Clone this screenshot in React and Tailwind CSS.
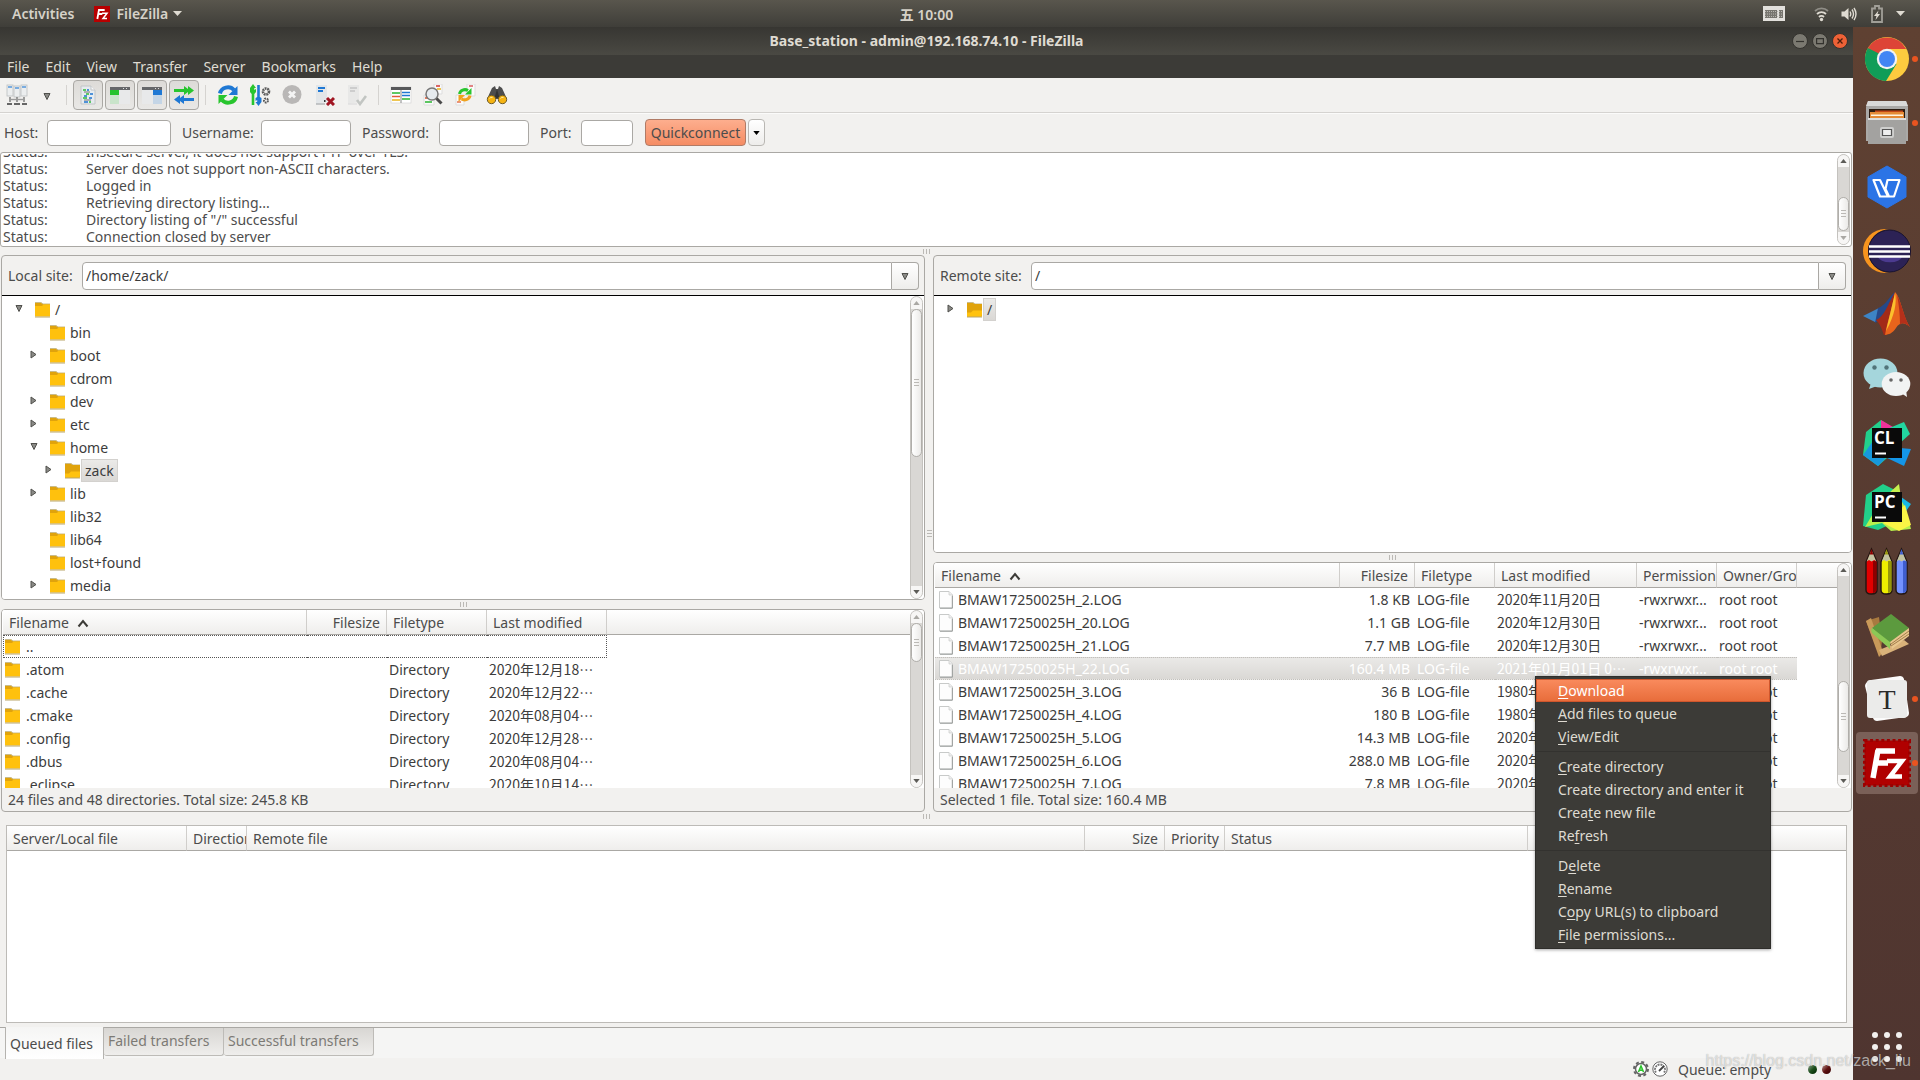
import React from 'react';

/* ---------- small shared pieces ---------- */

function Folder({ open }) {
  return (
    <svg className="h-[17px] w-[15px] shrink-0" viewBox="0 0 15 17" aria-hidden="true">
      <path d="M0 1.5h6l2 1.5h7v4H0z" fill="#e0a30c" />
      <path d="M0 1.5h6l2 1.5h7" fill="none" stroke="#c9bb8a" strokeWidth="1" />
      {open ? (
        <>
          <path d="M0 3h15v12.5H0z" fill="#e0a30c" />
          <path d="M0 11.5h4l2-2h9.5l-1 6.5H0z" fill="#ffc20e" />
        </>
      ) : (
        <path d="M0 5h7l1.5-1.5H15v12H0z" fill="#ffc10d" />
      )}
      <path d="M0 16h15" stroke="#b9a56a" strokeWidth="1" />
    </svg>
  );
}

function Page() {
  return (
    <svg className="h-[18px] w-[14px] shrink-0" viewBox="0 0 14 18" aria-hidden="true">
      <path d="M.5 .5h9.5l3.5 3.5v13H.5z" fill="#fdfdfd" stroke="#c8cac9" />
      <path d="M1 17.2h12.3V5" fill="none" stroke="#999b9a" />
      <path d="M10 .5v3.5h3.5" fill="#eee" stroke="#c8cac9" strokeWidth=".7" />
    </svg>
  );
}

function Triangle({ dir }) {
  const points = { right: '1,1 6,4.500 1,8', down: '1,1.500 7,1.500 4,7.500' }[dir];
  return (
    <svg className="h-[9px] w-[8px] shrink-0" viewBox="0 0 8 9" aria-hidden="true">
      <polygon points={points} fill="#8a8a86" stroke="#50504c" strokeWidth="1" />
    </svg>
  );
}

function SortArrow() {
  return (
    <svg className="mb-px ml-2 inline-block h-[9px] w-[12px]" viewBox="0 0 12 9" aria-hidden="true">
      <path d="M1.5 7.5L6 2l4.5 5.5" fill="none" stroke="#3c3b37" strokeWidth="2" />
    </svg>
  );
}

function Grip({ vertical }) {
  return (
    <div className={vertical ? 'flex flex-col gap-[2px]' : 'flex gap-[2px]'} aria-hidden="true">
      {[0, 1, 2].map((i) => (
        <span key={i} className={vertical ? 'h-px w-[5px] bg-[#bbb9b5]' : 'h-[5px] w-px bg-[#bbb9b5]'} />
      ))}
    </div>
  );
}

function Scrollbar({ before, thumb, after, atTop, atBottom }) {
  return (
    <div className="flex w-[13px] shrink-0 flex-col rounded-full border border-[#c4c2be] bg-[#d9d7d4]" aria-hidden="true">
      <div className="flex h-3 shrink-0 items-center justify-center rounded-t-full bg-[#f7f6f5]">
        <svg className="h-[4px] w-[7px]" viewBox="0 0 8 5"><path d="M0 5L4 0l4 5z" fill={atTop ? '#aaa8a4' : '#5c5b57'} /></svg>
      </div>
      <div className="flex min-h-0 flex-1 flex-col">
        <div style={{ flexGrow: before }} />
        <div
          className="flex items-center justify-center rounded-full border border-[#b0aeaa] bg-linear-to-r from-white to-[#ebeae8]"
          style={{ flexGrow: thumb }}
        >
          <Grip vertical />
        </div>
        <div style={{ flexGrow: after }} />
      </div>
      <div className="flex h-3 shrink-0 items-center justify-center rounded-b-full bg-[#f7f6f5]">
        <svg className="h-[4px] w-[7px]" viewBox="0 0 8 5"><path d="M0 0h8L4 5z" fill={atBottom ? '#aaa8a4' : '#5c5b57'} /></svg>
      </div>
    </div>
  );
}

/* ---------- toolbar ---------- */

const Ico = ({ children }) => (
  <svg className="h-[22px] w-[22px]" viewBox="0 0 22 22" aria-hidden="true">{children}</svg>
);

const TOOL_ICONS = {
  sites: (
    <Ico>
      {[1, 8, 15].map((x) => (
        <g key={x}>
          <rect x={x} y={x === 8 ? 2 : 1} width="6" height="11" fill="#eceeef" stroke="#bcbfc0" strokeWidth=".8" />
          <path d={`M${x + 1} ${x === 8 ? 4 : 3}h4`} stroke="#4a90d9" strokeWidth="1.4" />
          <path d={`M${x + 3} 13v5`} stroke="#777" strokeWidth="1.4" />
        </g>
      ))}
      <path d="M3 15.500h16" stroke="#9b9b9b" strokeWidth="1.4" />
      <path d="M1 20h5M8 20h6M16 20h5" stroke="#666" strokeWidth="2" />
    </Ico>
  ),
  log: (
    <Ico>
      <path d="M4 2h10l4 4v14H4z" fill="#e6ebef" stroke="#c2c5c7" />
      <path d="M14 2v4h4" fill="#f8f8f8" stroke="#c2c5c7" />
      <path d="M6 6h3M9 10h3M6 14h4M12 18h2" stroke="#2fbd3a" strokeWidth="1.4" />
      <path d="M10 6h2M13 10h3M7 12h3M12 14h3M7 18h4" stroke="#1e74cf" strokeWidth="1.4" />
      <path d="M7 8h6M7 16h7" stroke="#777" strokeWidth="1" />
    </Ico>
  ),
  localTree: (
    <Ico>
      <rect x="1" y="3" width="20" height="17" fill="#e8e9ea" />
      <path d="M1 3h20v3H1z" fill="#66676a" />
      <path d="M1 6h9v5H1z" fill="#25c32e" />
      <path d="M1 11h9v9H1z" fill="#c9e4ca" />
      <path d="M14 4.500h1M17 4.500h1" stroke="#ddd" />
    </Ico>
  ),
  remoteTree: (
    <Ico>
      <rect x="1" y="3" width="20" height="17" fill="#e8e9ea" />
      <path d="M1 3h20v3H1z" fill="#66676a" />
      <path d="M12 6h9v5h-9z" fill="#1f78d4" />
      <path d="M12 11h9v9h-9z" fill="#c4d5e6" />
      <path d="M14 4.500h1M17 4.500h1" stroke="#ddd" />
    </Ico>
  ),
  queue: (
    <Ico>
      <path d="M1 5h10V2l4 3V2l6 4.500-6 4.500V8l-4 3V8H1z" fill="#28c52e" />
      <path d="M21 14H11v-3l-4 3v-3l-6 4.500L7 20v-3l4 3v-3h10z" fill="#1f78d4" />
    </Ico>
  ),
  refresh: (
    <Ico>
      <path d="M3 9.500A8 7.500 0 0 1 17 6" fill="none" stroke="#1f78d4" strokeWidth="4" />
      <path d="M20.500 2v9h-9z" fill="#1f78d4" />
      <path d="M19 12.500A8 7.500 0 0 1 5 16" fill="none" stroke="#28c52e" strokeWidth="4" />
      <path d="M1.500 20v-9h9z" fill="#28c52e" />
    </Ico>
  ),
  process: (
    <Ico>
      <path d="M4 0l3 4H5.300v2L7 5v3L5.300 10v11H2.700V10L1 8V4z" fill="#28c52e" />
      <path d="M9.500 22l-3-4h1.700v-2l-1.700 1v-3l1.700-1V1h2.600v12l1.700 1v4z" fill="#1f78d4" />
      <circle cx="17" cy="7.500" r="3" fill="none" stroke="#5a5a5a" strokeWidth="2.600" strokeDasharray="1.8 .7" />
      <circle cx="17" cy="16.500" r="2" fill="none" stroke="#5a5a5a" strokeWidth="2" strokeDasharray="1.6 .7" />
    </Ico>
  ),
  cancel: (
    <Ico>
      <circle cx="11" cy="10.500" r="9.500" fill="#b9b7b6" />
      <path d="M8 7.500l6 6M14 7.500l-6 6" stroke="#f4f4f4" strokeWidth="2.800" />
    </Ico>
  ),
  disconnect: (
    <Ico>
      <path d="M3 1h11v17l-11 2z" fill="#e3e6e8" />
      <path d="M5 4h7M5 7h5" stroke="#1f78d4" strokeWidth="1.800" />
      <path d="M3 20h9" stroke="#a5a8aa" strokeWidth="1.200" />
      <path d="M11 16h1.500v2H11z" fill="#333" />
      <path d="M14 14l7 7M21 14l-7 7" stroke="#a01522" strokeWidth="3" />
    </Ico>
  ),
  reconnect: (
    <Ico>
      <path d="M3 1h11v17l-11 2z" fill="#e8e8e7" />
      <path d="M5 4h7M5 7h5" stroke="#cdcdcd" strokeWidth="1.800" />
      <path d="M3 20h9" stroke="#dcdcdc" strokeWidth="1.200" />
      <path d="M12 16l3 4 6-8" fill="none" stroke="#c2c5c2" strokeWidth="2.600" />
    </Ico>
  ),
  filter: (
    <Ico>
      <rect x="1" y="3" width="20" height="16" fill="#fff" stroke="#cfcfcf" strokeWidth=".6" />
      <path d="M1 3h20v3H1z" fill="#57585a" />
      <path d="M2 9h8" stroke="#28b52e" strokeWidth="1.500" />
      <path d="M2 12.500h8" stroke="#e05a3a" strokeWidth="1.500" />
      <path d="M2 16h8" stroke="#e8b31a" strokeWidth="1.500" />
      <path d="M12 8.500h8M12 11.500h8" stroke="#1f78d4" strokeWidth="1.400" />
      <path d="M12 15h8" stroke="#28b52e" strokeWidth="1.500" />
      <path d="M11 6v13" stroke="#888" />
    </Ico>
  ),
  compare: (
    <Ico>
      <path d="M12 0h8v10h-8z" fill="#fbfbfb" stroke="#ddd" />
      <path d="M14 2h4" stroke="#d13434" strokeWidth="1.500" />
      <path d="M15 5h4" stroke="#e8b31a" strokeWidth="1.500" />
      <path d="M2 11h10v10H2z" fill="#fbfbfb" stroke="#ddd" />
      <path d="M3 14h3" stroke="#e0502a" strokeWidth="1.500" />
      <path d="M3 18h7" stroke="#28b52e" strokeWidth="1.500" />
      <circle cx="10" cy="10" r="6" fill="#e6ebef" stroke="#787878" strokeWidth="1.500" />
      <path d="M14.500 14.500l5 5" stroke="#4a4a4a" strokeWidth="3" />
    </Ico>
  ),
  sync: (
    <Ico>
      <path d="M13 0h8v12h-8z" fill="#fbfbfb" stroke="#ddd" />
      <path d="M2 11h8v10H2z" fill="#fbfbfb" stroke="#ddd" />
      <path d="M15 2h4" stroke="#d13434" strokeWidth="1.200" />
      <path d="M3 18h4" stroke="#e0502a" strokeWidth="1.200" />
      <path d="M5.500 10A5.500 5 0 0 1 14 6.500" fill="none" stroke="#28c52e" strokeWidth="3" />
      <path d="M17.500 4v6.500H11z" fill="#28c52e" />
      <path d="M16 11.500A5.500 5 0 0 1 7.500 15" fill="none" stroke="#f0a11c" strokeWidth="3" />
      <path d="M4.500 18v-7H11z" fill="#f0a11c" />
    </Ico>
  ),
  find: (
    <Ico>
      <path d="M6 4l3-2 1 3h2l1-3 3 2 5 11H1z" fill="#4d4d4d" />
      <path d="M11 5l2.500 9h-5z" fill="#333" />
      <circle cx="5.500" cy="15.500" r="4.200" fill="#f5b312" stroke="#6b5a2a" strokeWidth="1" />
      <circle cx="16.500" cy="15.500" r="4.200" fill="#f5b312" stroke="#6b5a2a" strokeWidth="1" />
      <path d="M3.500 14.500a2.500 2.500 0 0 1 3-1M14.500 14.500a2.500 2.500 0 0 1 3-1" stroke="#fde9a8" fill="none" />
    </Ico>
  ),
};

const TOGGLES = [
  ['log', 'Toggle message log'],
  ['localTree', 'Toggle local directory tree'],
  ['remoteTree', 'Toggle remote directory tree'],
  ['queue', 'Toggle transfer queue'],
];
const ACTIONS = [
  ['refresh', 'Refresh file lists'],
  ['process', 'Process queue'],
  ['cancel', 'Cancel operation'],
  ['disconnect', 'Disconnect'],
  ['reconnect', 'Reconnect'],
];
const TOOLS = [
  ['filter', 'Filename filters'],
  ['compare', 'Directory comparison'],
  ['sync', 'Synchronized browsing'],
  ['find', 'Search for files'],
];

function Divider() {
  return <div className="mx-[6px] h-5 w-px shrink-0 bg-[#d5d3d0]" />;
}

function Toolbar() {
  return (
    <div className="flex h-[35px] shrink-0 items-center border-b border-[#d5d3d0] pl-[6px] shadow-[0_1px_0_#fbfbfa]" role="toolbar">
      <button type="button" aria-label="Site manager">{TOOL_ICONS.sites}</button>
      <button type="button" aria-label="Saved sites" className="ml-[15px] pt-[2px] pr-[9px]">
        <Triangle dir="down" />
      </button>
      <Divider />
      <div className="flex gap-[2px]">
        {TOGGLES.map(([id, label]) => (
          <button
            key={id}
            type="button"
            aria-label={label}
            aria-pressed="true"
            className="flex h-[30px] w-[30px] items-center justify-center rounded-[4px] border border-[#aaa8a4] bg-linear-to-b from-[#dddbd8] to-[#e9e8e6]"
          >
            {TOOL_ICONS[id]}
          </button>
        ))}
      </div>
      <Divider />
      <div className="flex gap-[10px] px-[5px]">
        {ACTIONS.map(([id, label]) => (
          <button key={id} type="button" aria-label={label}>{TOOL_ICONS[id]}</button>
        ))}
      </div>
      <Divider />
      <div className="flex gap-[10px] pl-[5px]">
        {TOOLS.map(([id, label]) => (
          <button key={id} type="button" aria-label={label}>{TOOL_ICONS[id]}</button>
        ))}
      </div>
    </div>
  );
}

function Field({ id, label, labelClass, inputClass, type = 'text' }) {
  return (
    <>
      <label htmlFor={id} className={`shrink-0 ${labelClass}`}>{label}</label>
      <input id={id} type={type} className={`h-[26px] rounded-[4px] border border-[#aaa8a4] bg-white px-1 ${inputClass}`} />
    </>
  );
}

function QuickConnect() {
  return (
    <form className="flex h-[39px] shrink-0 items-center pl-1" onSubmit={(e) => e.preventDefault()}>
      <Field id="host" label="Host:" labelClass="w-[43px]" inputClass="w-[124px]" />
      <Field id="user" label="Username:" labelClass="ml-[11px] w-[79px]" inputClass="w-[90px]" />
      <Field id="pass" label="Password:" labelClass="ml-[11px] w-[77px]" inputClass="w-[90px]" type="password" />
      <Field id="port" label="Port:" labelClass="ml-[11px] w-[41px]" inputClass="w-[52px]" />
      <button
        type="submit"
        className="ml-3 flex h-[27px] w-[101px] items-center justify-center rounded-[4px] border border-[#b07b66] bg-linear-to-b from-[#fdae8e] to-[#f58c63]"
      >
        Quickconnect
      </button>
      <button
        type="button"
        aria-label="Quickconnect history"
        className="ml-[2px] flex h-[27px] w-[17px] items-center justify-center rounded-[4px] border border-[#b9b7b3] bg-linear-to-b from-white to-[#eeedeb]"
      >
        <svg className="h-[4px] w-[7px]" viewBox="0 0 8 5"><path d="M0 0h8L4 5z" fill="#000" /></svg>
      </button>
    </form>
  );
}

/* ---------- message log ---------- */

const LOG = [
  'Insecure server, it does not support FTP over TLS.',
  'Server does not support non-ASCII characters.',
  'Logged in',
  'Retrieving directory listing...',
  'Directory listing of "/" successful',
  'Connection closed by server',
];

function MessageLog() {
  return (
    <section className="mr-px flex h-[95px] shrink-0 overflow-hidden rounded-[3px] border border-[#aaa8a4] bg-white py-px pr-px pl-[2px]">
      <div className="flex flex-1 flex-col justify-end overflow-hidden">
        {LOG.map((text) => (
          <p key={text} className="flex h-[17px] shrink-0 items-center leading-[17px]">
            <span className="w-[83px]">Status:</span>
            <span>{text}</span>
          </p>
        ))}
      </div>
      <Scrollbar before={36} thumb={31} after={1} atBottom />
    </section>
  );
}

/* ---------- site bars and trees ---------- */

function SiteBar({ id, label, value, labelClass }) {
  return (
    <div className="flex h-[40px] shrink-0 items-center border-b border-black px-[5px]">
      <label htmlFor={id} className={`shrink-0 ${labelClass}`}>{label}</label>
      <input
        id={id}
        defaultValue={value}
        className="h-7 min-w-0 flex-1 rounded-l-[4px] border border-[#aaa8a4] bg-white px-[3px] text-[#3c3c3c]"
      />
      <button
        type="button"
        aria-label={`${label} history`}
        className="flex h-7 w-[27px] items-center justify-center rounded-r-[4px] border border-l-0 border-[#aaa8a4] bg-linear-to-b from-white to-[#eeedeb] pt-[2px]"
      >
        <Triangle dir="down" />
      </button>
    </div>
  );
}

const INDENT = ['pl-[13px]', 'pl-[28px]', 'pl-[43px]'];

function TreeRow({ name, level, arrow, open, selected }) {
  return (
    <li className={`flex h-[23px] items-center ${INDENT[level]}`}>
      <span className="mr-[12px] w-[8px] pb-[2px]">{arrow && <Triangle dir={arrow} />}</span>
      <Folder open={open} />
      <span
        className={
          selected
            ? 'ml-px h-[23px] border border-[#d3d1ce] bg-linear-to-b from-[#ebeae8] to-[#dad8d5] px-[3px] leading-[22px] text-[#3c3c3c]'
            : 'px-[5px] leading-[23px] text-[#3c3c3c]'
        }
      >
        {name}
      </span>
    </li>
  );
}

const LOCAL_TREE = [
  { name: '/', level: 0, arrow: 'down' },
  { name: 'bin', level: 1 },
  { name: 'boot', level: 1, arrow: 'right' },
  { name: 'cdrom', level: 1 },
  { name: 'dev', level: 1, arrow: 'right' },
  { name: 'etc', level: 1, arrow: 'right' },
  { name: 'home', level: 1, arrow: 'down' },
  { name: 'zack', level: 2, arrow: 'right', open: true, selected: true },
  { name: 'lib', level: 1, arrow: 'right' },
  { name: 'lib32', level: 1 },
  { name: 'lib64', level: 1 },
  { name: 'lost+found', level: 1 },
  { name: 'media', level: 1, arrow: 'right' },
];

const PANEL = 'flex min-h-0 flex-col overflow-hidden rounded-[4px] border border-[#aaa8a4]';

/* ---------- file lists ---------- */

const TH = 'h-[25px] overflow-hidden border-r border-b border-[#d0cecb] border-b-[#aaa8a4] px-[6px] text-left font-normal whitespace-nowrap';
const TD = 'h-[23px] overflow-hidden px-[1px] text-ellipsis whitespace-nowrap';
const CJK = "font-['Noto_Sans_CJK_SC',sans-serif]";

const LOCAL_FILES = [
  ['..', '', ''],
  ['.atom', 'Directory', '2020年12月18…'],
  ['.cache', 'Directory', '2020年12月22…'],
  ['.cmake', 'Directory', '2020年08月04…'],
  ['.config', 'Directory', '2020年12月28…'],
  ['.dbus', 'Directory', '2020年08月04…'],
  ['.eclipse', 'Directory', '2020年10月14…'],
];

const REMOTE_FILES = [
  ['_2', '1.8 KB', '2020年11月20日'],
  ['_20', '1.1 GB', '2020年12月30日'],
  ['_21', '7.7 MB', '2020年12月30日'],
  ['_22', '160.4 MB', '2021年01月01日 0…', true],
  ['_3', '36 B', '1980年01月01日'],
  ['_4', '180 B', '1980年01月01日'],
  ['_5', '14.3 MB', '2020年11月20日'],
  ['_6', '288.0 MB', '2020年11月20日'],
  ['_7', '7.8 MB', '2020年11月20日'],
];

function LocalList() {
  const dot = 'border-y border-dotted border-[#555]';
  return (
    <section className={`${PANEL} flex-[202_1_0]`}>
      <div className="flex min-h-0 flex-1 overflow-hidden bg-white pr-px pl-px">
        <div className="min-w-0 flex-1 overflow-hidden">
          <table className="w-full table-fixed border-separate border-spacing-0 leading-[21px]">
            <colgroup>
              <col className="w-[304px]" />
              <col className="w-[80px]" />
              <col className="w-[100px]" />
              <col className="w-[120px]" />
              <col />
            </colgroup>
            <thead className="bg-linear-to-b from-white to-[#eeedeb]">
              <tr>
                <th className={TH}>Filename<SortArrow /></th>
                <th className={TH}><span className="block text-right">Filesize</span></th>
                <th className={TH}>Filetype</th>
                <th className={TH}>Last modified</th>
                <th className="border-b border-[#aaa8a4]" />
              </tr>
            </thead>
            <tbody className="text-[#3c3c3c]">
              {LOCAL_FILES.map(([name, type, date], i) => (
                <tr key={name}>
                  <td className={`${TD} ${i === 0 ? `${dot} border-l` : 'pl-[2px]'}`}>
                    <span className="flex items-center gap-[6px]"><Folder />{name}</span>
                  </td>
                  <td className={`${TD} ${i === 0 ? dot : ''}`} />
                  <td className={`${TD} ${i === 0 ? dot : ''}`}><span className="pl-px">{type}</span></td>
                  <td className={`${TD} ${CJK} ${i === 0 ? `${dot} border-r` : ''}`}><span className="pl-px">{date}</span></td>
                  <td />
                </tr>
              ))}
            </tbody>
          </table>
        </div>
        <Scrollbar before={0} thumb={31} after={121} atTop />
      </div>
      <p className="flex h-[23px] shrink-0 items-center px-[6px]">24 files and 48 directories. Total size: 245.8 KB</p>
    </section>
  );
}

function RemoteList() {
  return (
    <section className={`${PANEL} flex-1`}>
      <div className="flex min-h-0 flex-1 overflow-hidden bg-white pr-px pl-px">
        <div className="min-w-0 flex-1 overflow-hidden">
          <table className="w-full table-fixed border-separate border-spacing-0 leading-[21px]">
            <colgroup>
              <col className="w-[405px]" />
              <col className="w-[75px]" />
              <col className="w-[80px]" />
              <col className="w-[142px]" />
              <col className="w-[80px]" />
              <col className="w-[80px]" />
              <col />
            </colgroup>
            <thead className="bg-linear-to-b from-white to-[#eeedeb]">
              <tr>
                <th className={TH}>Filename<SortArrow /></th>
                <th className={TH}><span className="block text-right">Filesize</span></th>
                <th className={TH}>Filetype</th>
                <th className={TH}>Last modified</th>
                <th className={`${TH} pr-0`}>Permissions</th>
                <th className={`${TH} pr-0`}>Owner/Group</th>
                <th className="border-b border-[#aaa8a4]" />
              </tr>
            </thead>
            <tbody className="text-[#3c3c3c]">
              {REMOTE_FILES.map(([suffix, size, date, selected]) => {
                const cell = selected
                  ? `${TD} border-y border-dotted border-[#c3c1bd] bg-linear-to-b from-[#eae9e7] to-[#dad8d5] text-white`
                  : TD;
                return (
                  <tr key={suffix}>
                    <td className={cell}>
                      <span className="flex items-center gap-[5px] pl-[3px]"><Page />{`BMAW17250025H${suffix}.LOG`}</span>
                    </td>
                    <td className={`${cell} text-right`}><span className="pr-[4px]">{size}</span></td>
                    <td className={cell}><span className="pl-px">LOG-file</span></td>
                    <td className={`${cell} ${CJK}`}><span className="pl-px">{date}</span></td>
                    <td className={cell}><span className="pl-px">-rwxrwxr...</span></td>
                    <td className={cell}><span className="pl-px">root root</span></td>
                    <td />
                  </tr>
                );
              })}
            </tbody>
          </table>
        </div>
        <Scrollbar before={109} thumb={65} after={24} />
      </div>
      <p className="flex h-[23px] shrink-0 items-center px-[6px]">Selected 1 file. Total size: 160.4 MB</p>
    </section>
  );
}

/* Each entry: text before the mnemonic, the mnemonic, text after it. */
const MENU = [
  [['', 'D', 'ownload'], ['', 'A', 'dd files to queue'], ['', 'V', 'iew/Edit']],
  [['', 'C', 'reate directory'], ['Create director', 'y', ' and enter it'], ['Crea', 't', 'e new file'], ['Re', 'f', 'resh']],
  [['D', 'e', 'lete'], ['', 'R', 'ename'], ['C', 'o', 'py URL(s) to clipboard'], ['', 'F', 'ile permissions...']],
];

function ContextMenu() {
  return (
    <div
      role="menu"
      className="absolute top-[114px] left-[602px] z-10 w-[236px] border border-[#2f2e2b] bg-[#3c3b37] py-[2px] text-[#dfdbd2] shadow-[0_1px_3px_rgba(0,0,0,0.35)]"
    >
      {MENU.map((group, g) => (
        <div key={g} className={g > 0 ? 'mt-[3px] border-t border-[#33322f] pt-[3px]' : ''}>
          {group.map(([pre, key, post], i) => (
            <button
              key={pre + key + post}
              type="button"
              role="menuitem"
              className={
                g === 0 && i === 0
                  ? 'block h-[23px] w-full border border-[#d0562c] bg-linear-to-b from-[#f98a5c] to-[#e86d3b] pl-[21px] text-left leading-[21px] text-white'
                  : 'block h-[23px] w-full pl-[22px] text-left leading-[23px]'
              }
            >
              {pre}
              <span className={key === 'y' ? '' : 'underline underline-offset-2'}>{key}</span>
              {post}
            </button>
          ))}
        </div>
      ))}
    </div>
  );
}

/* ---------- transfer queue ---------- */

function TransferQueue() {
  return (
    <section className="flex shrink-0 flex-col">
      <div className="mr-[6px] ml-[6px] h-[198px] overflow-hidden border border-[#bdbbb7] bg-white">
        <table className="w-full table-fixed border-separate border-spacing-0">
          <colgroup>
            <col className="w-[180px]" />
            <col className="w-[60px]" />
            <col className="w-[838px]" />
            <col className="w-[80px]" />
            <col className="w-[60px]" />
            <col className="w-[303px]" />
            <col />
          </colgroup>
          <thead className="bg-linear-to-b from-white to-[#eeedeb]">
            <tr>
              <th className={TH}>Server/Local file</th>
              <th className={`${TH} pr-0`}>Direction</th>
              <th className={TH}>Remote file</th>
              <th className={TH}><span className="block text-right">Size</span></th>
              <th className={`${TH} pr-0`}>Priority</th>
              <th className={TH}>Status</th>
              <th className="border-b border-[#aaa8a4]" />
            </tr>
          </thead>
        </table>
      </div>
      <div className="mt-1 flex h-[31px] items-start border-t border-[#aaa8a4] bg-[#f5f5f4] pl-[5px]" role="tablist">
        <button
          type="button"
          role="tab"
          aria-selected="true"
          className="-mt-px h-8 w-[99px] border-x border-[#b5b3af] bg-linear-to-b from-[#f5f5f4] to-white pl-1 text-left"
        >
          Queued files
        </button>
        <button
          type="button"
          role="tab"
          aria-selected="false"
          className="h-[28px] w-[120px] rounded-b-[3px] border border-t-0 border-l-0 border-[#bdbbb7] bg-linear-to-b from-[#d8d6d3] to-[#efeeec] pb-[2px] pl-1 text-left text-[#7c7a75]"
        >
          Failed transfers
        </button>
        <button
          type="button"
          role="tab"
          aria-selected="false"
          className="h-[28px] w-[150px] rounded-b-[3px] border border-t-0 border-l-0 border-[#bdbbb7] bg-linear-to-b from-[#d8d6d3] to-[#efeeec] pb-[2px] pl-1 text-left text-[#7c7a75]"
        >
          Successful transfers
        </button>
      </div>
      <footer className="flex h-[22px] items-center justify-end pr-[22px]">
        <svg className="mr-[3px] h-4 w-4" viewBox="0 0 16 16" aria-hidden="true">
          <circle cx="8" cy="8" r="7" fill="none" stroke="#666" strokeWidth="2" strokeDasharray="3 2.500" />
          <circle cx="8" cy="8" r="5.500" fill="#fff" stroke="#666" strokeWidth="1.500" />
          <path d="M5.500 11L8 5l2.500 6M6.500 9.200h3" fill="none" stroke="#2cc42c" strokeWidth="1.600" />
        </svg>
        <svg className="mr-[10px] h-4 w-4" viewBox="0 0 16 16" aria-hidden="true">
          <circle cx="8" cy="8" r="7.200" fill="#fff" stroke="#666" strokeWidth="1" />
          <path d="M4 11.500a5 5 0 1 1 8 0" fill="none" stroke="#777" strokeWidth="1.800" strokeDasharray="2 .8" />
          <path d="M7 10l5-5" stroke="#444" strokeWidth="1.800" />
        </svg>
        <span className="w-[93px] whitespace-nowrap">Queue: empty</span>
        <span className="ml-[37px] h-[9px] w-[9px] rounded-full bg-linear-to-br from-[#8fa58f] via-[#1d4f1d] to-[#022502]" />
        <span className="ml-[5px] h-[9px] w-[9px] rounded-full bg-linear-to-br from-[#b58f8f] via-[#5f1212] to-[#330202]" />
      </footer>
    </section>
  );
}

/* ---------- dock ---------- */

const FzMark = () => (
  <g fill="none" stroke="#fff" strokeLinejoin="miter">
    <path d="M10 39l5-28M13 12h19M12 24h13" strokeWidth="5.500" />
    <path d="M24 22h15L27 37.500h12" strokeWidth="4.500" />
  </g>
);

const DOCK = [
  {
    name: 'Google Chrome', running: true,
    art: (
      <>
        <circle cx="24" cy="24" r="22" fill="#fdcb3f" />
        <path d="M4.900 13A22 22 0 0 0 23 46l10.500-17L24 24z" fill="#109d58" />
        <path d="M4.900 13A22 22 0 0 1 43.100 14H24L14 27z" fill="#dd4437" />
        <path d="M4.900 13l9 15.500 4-9z" fill="#109d58" />
        <circle cx="24" cy="24" r="10.200" fill="#f3f3f3" />
        <circle cx="24" cy="24" r="8" fill="#4285f4" />
      </>
    ),
  },
  {
    name: 'Files', running: true,
    art: (
      <>
        <path d="M5 2h38l2 6v34H3V8z" fill="#aaa9a7" />
        <path d="M5 2h38l2 5H3z" fill="#d9d9d8" />
        <path d="M6 10h36v12H6z" fill="#2b1c12" />
        <path d="M7 13h34v8H7z" fill="#e48a35" />
        <path d="M8 15.500h32v1.500H8z" fill="#fff3e0" />
        <path d="M12 11.500h28v1.500H12z" fill="#c14719" />
        <path d="M5 19h38v26H5z" fill="#a3a2a0" />
        <path d="M5 19h38v2H5z" fill="#dededd" />
        <rect x="17" y="28" width="14" height="11" rx="2" fill="#cfcfce" />
        <path d="M19.500 30.500h9v6h-9z" fill="#efefef" stroke="#555" strokeWidth="1.200" />
      </>
    ),
  },
  {
    name: 'WPS Writer',
    art: (
      <>
        <path d="M24 3l19 11v20L24 45 5 34V14z" fill="#2b74e6" strokeLinejoin="round" stroke="#2b74e6" />
        <path d="M10.500 17h6.500l8 16.500h-8zM24.500 17h12l-5.500 16.500h-5L22.500 26z" fill="none" stroke="#fff" strokeWidth="2.200" strokeLinejoin="round" />
      </>
    ),
  },
  {
    name: 'Eclipse',
    art: (
      <>
        <circle cx="22" cy="24" r="22" fill="#f7941e" />
        <circle cx="27" cy="24" r="22" fill="#5e4132" />
        <circle cx="26.500" cy="24" r="21" fill="#2c2255" stroke="#18122f" />
        <path d="M14 29h26a14 10 0 0 1-26 0z" fill="#4b3a8f" />
        <path d="M6 19.500h41M6 24.500h41M6 29.500h41" stroke="#fff" strokeWidth="2.400" />
      </>
    ),
  },
  {
    name: 'MATLAB',
    art: (
      <>
        <path d="M0 25l16-8 7 6-11 8z" fill="#3d84c6" />
        <path d="M15 17C22 15 26 6 32 1l-8 24-12 7z" fill="#26498a" />
        <path d="M13 29c8-3 11-14 19-28l-6 42-5 1c-2-5-3-10-8-15z" fill="#a32a18" />
        <path d="M32 1c6 6 8 25 15 35-6-5-10-5-14 1s-7 6-11 7c2-12 7-26 10-43z" fill="#e8641c" />
        <path d="M32 2c2 9 0 22-9 38 3-13 6-25 9-38z" fill="#fbc02d" />
        <path d="M34 4c5 9 7 23 13 32-6-5-9-4-10-2 0-10-1-20-3-30z" fill="#b5301a" />
      </>
    ),
  },
  {
    name: 'WeChat',
    art: (
      <>
        <ellipse cx="17.500" cy="18" rx="17" ry="14.500" fill="#a5d6dc" />
        <path d="M8 28l-2 6 8-3z" fill="#a5d6dc" />
        <circle cx="11.500" cy="12.500" r="2.200" fill="#52747a" /><circle cx="23.500" cy="12.500" r="2.200" fill="#52747a" />
        <ellipse cx="33" cy="29" rx="14.300" ry="12" fill="#f1f3f3" />
        <path d="M38 38l6 4-1-7z" fill="#f1f3f3" />
        <circle cx="28" cy="25" r="1.800" fill="#666" /><circle cx="38" cy="25" r="1.800" fill="#666" />
      </>
    ),
  },
  {
    name: 'CLion',
    art: (
      <>
        <path d="M3 13L18 1l12 8-6 30-9 8L0 36z" fill="#22d08c" />
        <path d="M0 36l10-14 12 18-7 7z" fill="#1798dc" />
        <path d="M18 1l12 7-12 6z" fill="#f0319a" />
        <path d="M24 10l17-7 6 12-10 9z" fill="#22d5a0" />
        <path d="M22 38l15-9 11 1-7 17z" fill="#1496e8" />
        <rect x="9" y="9" width="30" height="30" fill="#0a0a0a" />
        <path d="M12 34.500h11" stroke="#fff" strokeWidth="2" />
        <text x="11" y="25" fill="#fff" fontSize="17" fontWeight="700" fontFamily="Open Sans, sans-serif">CL</text>
      </>
    ),
  },
  {
    name: 'PyCharm',
    art: (
      <>
        <path d="M3 12L20 1l12 6-4 34-13 6L0 43z" fill="#21cf8a" />
        <path d="M26 10l10-9 2 14z" fill="#c7f04e" />
        <path d="M38 14l10 7-7 10z" fill="#18b9e6" />
        <path d="M2 44l12-20 20-14 8 14 6 22-20 2-9-8z" fill="#b7ef4d" />
        <path d="M20 40l22-18 6 20-12 6z" fill="#fbf546" />
        <rect x="9" y="9" width="30" height="30" fill="#0a0a0a" />
        <path d="M12 34.500h11" stroke="#fff" strokeWidth="2" />
        <text x="11" y="25" fill="#fff" fontSize="17" fontWeight="700" fontFamily="Open Sans, sans-serif">PC</text>
      </>
    ),
  },
  {
    name: 'Crayons',
    art: (
      <>
        {[['#e10000', '#8d0000', 3], ['#eeee00', '#97970a', 18], ['#7391ff', '#3f5ed0', 33]].map(([a, b, x]) => (
          <g key={x} transform={`translate(${x} 1)`}>
            <path d="M0 14L5.500 1 11 14v28q0 4-5.500 4T0 42z" fill={a} stroke="#221510" strokeWidth="1.400" />
            <path d="M7 13h3.500v29q0 2-3.500 3z" fill={b} />
            <path d="M.7 13.500L5.500 2l4.800 11.500-2-1.500-2.800 1.500-2.500-1.500z" fill="#c3c3a0" />
            <path d="M3.700 6.500L5.500 1l1.800 5.500z" fill={b} />
          </g>
        ))}
      </>
    ),
  },
  {
    name: 'Books',
    art: (
      <>
        <path d="M3 10l13-4 3 24-2 16z" fill="#a8793f" />
        <path d="M3 10l5-3 12 34-4 5z" fill="#c99a5a" />
        <path d="M16 39l25-10 5 4-27 12z" fill="#d9b27a" />
        <path d="M9 17L28 3l18 14-19 16z" fill="#5c9a3e" />
        <path d="M9 17l18 14 0 7L10 23q-3-3-1-6z" fill="#8cc956" />
        <path d="M27 31l19-14v8L29 38z" fill="#e8c68e" />
        <path d="M28 35l18-12M28 33l18-13" stroke="#8f6a3a" strokeWidth=".8" />
      </>
    ),
  },
  {
    name: 'Typora', running: true,
    art: (
      <>
        <path d="M8 5l29-4q3 0 4 3l5 34q0 3-3 4l-29 4q-3 0-4-3L2 11q0-4 6-6z" fill="#fbfbfb" />
        <rect x="4" y="5" width="40" height="38" rx="3" fill="#ebebea" />
        <text x="24" y="34" textAnchor="middle" fill="#2a2a2a" fontSize="28" fontFamily="Liberation Serif, serif">T</text>
      </>
    ),
  },
  {
    name: 'FileZilla', running: true, active: true,
    art: (
      <>
        <rect x="1.500" y="1.500" width="45" height="45" fill="#b00000" stroke="#9c0000" strokeWidth="3" strokeDasharray="3 2.600" />
        <FzMark />
      </>
    ),
  },
];

function Dock() {
  return (
    <nav className="flex w-[67px] shrink-0 flex-col bg-linear-to-b from-[#5f4132] to-[#4f3530]" aria-label="Dock">
      {DOCK.map(({ name, art, running, active }) => (
        <button key={name} type="button" aria-label={name} className="relative flex h-16 shrink-0 items-center justify-center">
          <span className={`flex h-[62px] w-[62px] items-center justify-center rounded-[4px] ${active ? 'bg-[#7a6058]' : ''}`}>
            <svg className="h-12 w-12" viewBox="0 0 48 48">{art}</svg>
          </span>
          {running && <span className="absolute top-[29px] right-[2px] h-[6px] w-[6px] rounded-full bg-[#e95420]" />}
        </button>
      ))}
      <button type="button" aria-label="Show applications" className="mt-auto mb-[18px] flex justify-center">
        <svg className="h-[30px] w-[30px]" viewBox="0 0 30 30">
          {[3, 15, 27].map((y) => [3, 15, 27].map((x) => <circle key={`${x}-${y}`} cx={x} cy={y} r="3" fill="#f2f0ee" />))}
        </svg>
      </button>
    </nav>
  );
}

/* ---------- top bar and window chrome ---------- */

function TopBar() {
  return (
    <header className="grid h-[27px] shrink-0 grid-cols-[1fr_auto_1fr_67px] items-center bg-linear-to-b from-[#59564d] to-[#3f3e39] font-semibold text-[#d6d2c9]">
      <div className="flex items-center pl-3">
        <button type="button">Activities</button>
        <button type="button" className="ml-5 flex items-center">
          <svg className="mr-[6px] h-4 w-4" viewBox="0 0 48 48" aria-hidden="true">
            <path d="M0 0h48v48H0z" fill="#b80000" />
            <FzMark />
          </svg>
          FileZilla
          <svg className="ml-[5px] h-[5px] w-[9px]" viewBox="0 0 9 5"><path d="M0 0h9L4.500 5z" fill="#dfdbd2" /></svg>
        </button>
      </div>
      <time className="pt-px">五 10:00</time>
      <div className="col-span-2 flex items-center justify-end pr-[15px]">
        <svg className="mr-[29px] h-4 w-[22px]" viewBox="0 0 22 16" aria-label="Keyboard">
          <path d="M0 0h22v15H0z" fill="#e2e0dc" />
          <path d="M2 4h12v8H2zM16 4h4v8h-4z" fill="#77756f" />
          <path d="M2 5.500h18M2 8h18M2 10.500h18" stroke="#b9b7b1" strokeDasharray="1 1" />
        </svg>
        <svg className="mr-3 h-4 w-[15px]" viewBox="0 0 15 16" aria-label="Wi-Fi" fill="none">
          <path d="M1 5a9.500 9.500 0 0 1 13 0" stroke="#8f8d86" strokeWidth="1.800" />
          <path d="M3 8a6.500 6.500 0 0 1 9 0M5 11a3.500 3.500 0 0 1 5 0" stroke="#dfdbd2" strokeWidth="1.800" />
          <circle cx="7.500" cy="13.500" r="1.700" fill="#dfdbd2" />
        </svg>
        <svg className="mr-[14px] h-4 w-4" viewBox="0 0 16 16" aria-label="Volume" fill="none" stroke="#dfdbd2" strokeWidth="1.400">
          <path d="M.5 5.500h3L7.500 2v12l-4-3.500h-3z" fill="#dfdbd2" stroke="none" />
          <path d="M9 5.500q1.500 2.500 0 5M11 3.500q3 4.500 0 9M13 2q4 6 0 12" />
        </svg>
        <svg className="mr-[13px] h-[18px] w-[12px]" viewBox="0 0 12 18" aria-label="Battery">
          <path d="M1 3.500h3V1h4v2.500h3V17H1z" fill="none" stroke="#a19f98" strokeWidth="1.800" />
          <path d="M7.500 5.500L3 11h2.500l-1 4L9 9H6.500z" fill="#dfdbd2" />
        </svg>
        <svg className="h-[5px] w-[9px]" viewBox="0 0 9 5" aria-hidden="true"><path d="M0 0h9L4.500 5z" fill="#dfdbd2" /></svg>
      </div>
    </header>
  );
}

const ROUND = 'flex h-4 w-4 items-center justify-center rounded-full border border-[#33322e]';

function TitleBar() {
  return (
    <div className="grid h-7 shrink-0 grid-cols-[1fr_auto_1fr] items-center bg-linear-to-b from-[#373632] to-[#4a4943] text-[#dfdbd2]">
      <span />
      <h1 className="pb-px font-bold">Base_station - admin@192.168.74.10 - FileZilla</h1>
      <div className="flex justify-end gap-1 pr-[5px]">
        <button type="button" aria-label="Minimize" className={`${ROUND} bg-[#7b7971]`}>
          <svg className="h-2 w-2" viewBox="0 0 8 8"><path d="M0 4.500h8" stroke="#33322e" strokeWidth="1.200" /></svg>
        </button>
        <button type="button" aria-label="Maximize" className={`${ROUND} bg-[#7b7971]`}>
          <svg className="h-2 w-2" viewBox="0 0 8 8"><path d="M.6 1.600h6.800v5H.6z" fill="none" stroke="#33322e" strokeWidth="1.200" /></svg>
        </button>
        <button type="button" aria-label="Close" className={`${ROUND} bg-[#ee6136]`}>
          <svg className="h-2 w-2" viewBox="0 0 8 8"><path d="M1.500 1.500l5 5M6.500 1.500l-5 5" stroke="#4b1d0c" strokeWidth="1.300" /></svg>
        </button>
      </div>
    </div>
  );
}

const MENUS = ['File', 'Edit', 'View', 'Transfer', 'Server', 'Bookmarks', 'Help'];

export default function App() {
  return (
    <div className="relative flex h-screen flex-col overflow-hidden font-['Noto_Sans','Noto_Sans_CJK_SC',sans-serif] text-[14px] text-[#4c4c4c]">
      <TopBar />
      <div className="flex min-h-0 flex-1">
        <main className="flex min-w-0 flex-1 flex-col bg-[#f2f1ef]">
          <TitleBar />
          <div className="flex h-[23px] shrink-0 items-center gap-4 bg-[#3c3b37] pl-[7px] text-[#dfdbd2]" role="menubar">
            {MENUS.map((m) => (
              <button key={m} type="button" role="menuitem">{m}</button>
            ))}
          </div>
          <Toolbar />
          <QuickConnect />
          <MessageLog />
          <div className="flex h-2 shrink-0 items-center justify-center"><Grip /></div>
          <div className="mr-px ml-px grid min-h-0 flex-1 grid-cols-[924fr_8px_919fr]">
            <div className="flex min-h-0 min-w-0 flex-col">
              <section className={`${PANEL} flex-[346_1_0]`}>
                <SiteBar id="local" label="Local site:" value="/home/zack/" labelClass="w-[75px] pl-px" />
                <div className="flex min-h-0 flex-1 overflow-hidden bg-white pr-px">
                  <ul className="flex-1 overflow-hidden pt-[2px]">
                    {LOCAL_TREE.map((row) => <TreeRow key={row.name} {...row} />)}
                  </ul>
                  <Scrollbar before={0} thumb={143} after={134} atTop />
                </div>
              </section>
              <div className="flex h-[9px] shrink-0 items-center justify-center"><Grip /></div>
              <LocalList />
            </div>
            <div className="flex items-center justify-center"><Grip vertical /></div>
            <div className="flex min-h-0 min-w-0 flex-col">
              <section className={`${PANEL} h-[298px] shrink`}>
                <SiteBar id="remote" label="Remote site:" value="/" labelClass="w-[92px] pl-px" />
                <ul className="flex-1 bg-white pt-[2px]">
                  <TreeRow name="/" level={0} arrow="right" open selected />
                </ul>
              </section>
              <div className="flex h-[9px] shrink-0 items-center justify-center"><Grip /></div>
              <div className="relative flex min-h-0 flex-1 flex-col">
                <RemoteList />
                <ContextMenu />
              </div>
            </div>
          </div>
          <div className="flex h-[13px] shrink-0 items-start justify-center pt-[2px]"><Grip /></div>
          <TransferQueue />
        </main>
        <Dock />
      </div>
      <p className="pointer-events-none absolute right-[9px] bottom-[7px] font-['Liberation_Sans',sans-serif] text-base text-white/60 [text-shadow:0_0_1px_rgba(0,0,0,0.35)]">
        https://blog.csdn.net/zack_liu
      </p>
    </div>
  );
}
